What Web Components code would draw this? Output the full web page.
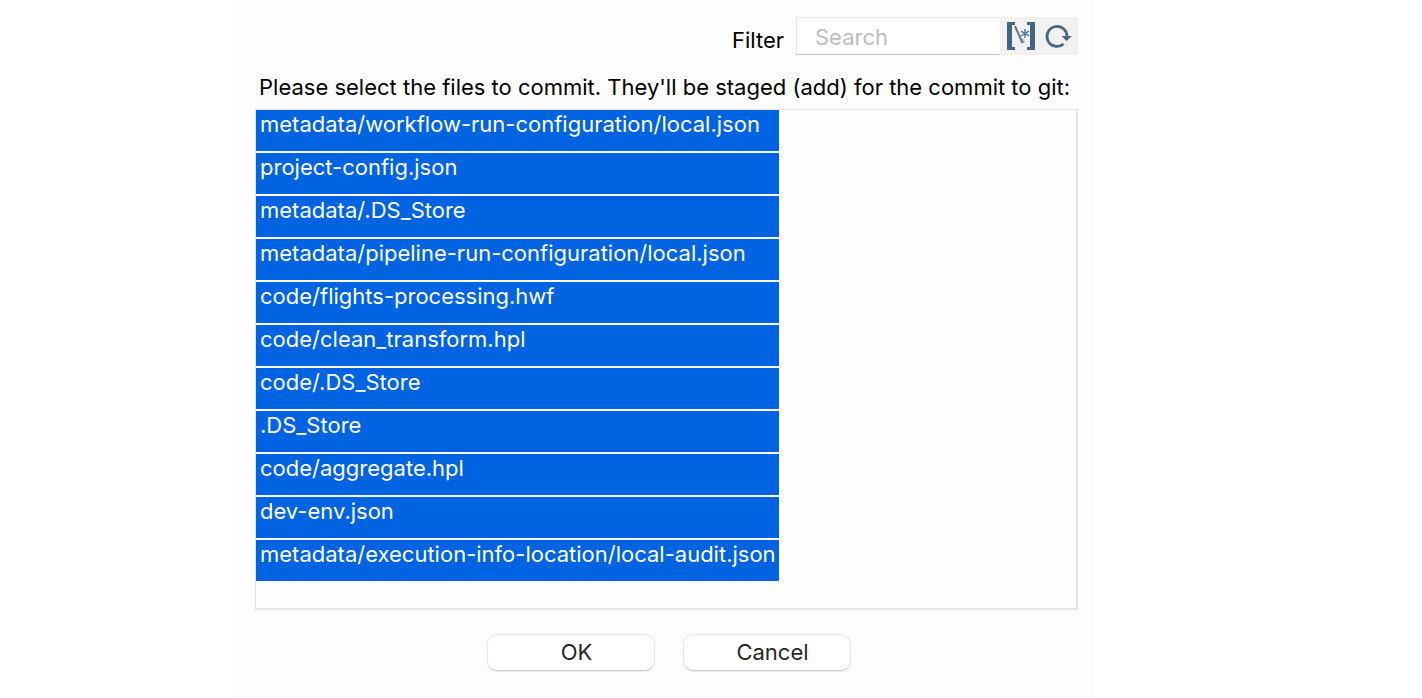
<!DOCTYPE html>
<html lang="en">
<head>
<meta charset="utf-8">
<meta name="viewport" content="width=device-width, initial-scale=1">
<title>Commit files</title>
<style>
    body {
        margin: 0;
        min-height: 100vh;
        display: grid;
        grid-template-columns: 232fr 863fr 327fr;
        background-color: #fff;
        color: #000;
        font-family: Inter, "Liberation Sans", sans-serif;
        font-size: 22px;
        line-height: 28px;
    }
    commit-dialog {
        grid-column: 2;
    }
</style>
</head>
<body>
<commit-dialog>
    <search-filter slot="filter" label="Filter" placeholder="Search"></search-filter>
    <span slot="message">Please select the files to commit. They'll be staged (add) for the commit to git:</span>
    <file-list></file-list>
    <dialog-button slot="actions">OK</dialog-button>
    <dialog-button slot="actions">Cancel</dialog-button>
</commit-dialog>

<script>
class CommitDialog extends HTMLElement {
    constructor() {
        super();
        this.attachShadow({ mode: 'open' });
        this.shadowRoot.innerHTML = `
            <style>
                :host {
                    display: block;
                    box-sizing: border-box;
                    padding: 17px 17px 24px 23px;
                    background-color: #fdfdfd;
                }
                .filter {
                    display: flex;
                    justify-content: flex-end;
                }
                .message {
                    padding: 18px 4px 8px;
                }
                .actions {
                    display: flex;
                    justify-content: center;
                    gap: 28px;
                    padding: 24px 0 0 4px;
                }
            </style>
            <div class="filter"><slot name="filter"></slot></div>
            <div class="message"><slot name="message"></slot></div>
            <slot></slot>
            <div class="actions"><slot name="actions"></slot></div>
        `;
    }
}

class SearchFilter extends HTMLElement {
    constructor() {
        super();
        this.attachShadow({ mode: 'open' });
    }

    connectedCallback() {
        const label = this.getAttribute('label') || 'Filter';
        const placeholder = this.getAttribute('placeholder') || '';

        this.shadowRoot.innerHTML = `
            <style>
                :host {
                    display: flex;
                    align-items: center;
                    gap: 12px;
                }
                label {
                    padding-top: 8px;
                }
                .bar {
                    display: flex;
                    align-items: center;
                    box-sizing: border-box;
                    height: 38px;
                    padding-right: 2px;
                    background-color: #f1f1f1;
                }
                input {
                    box-sizing: border-box;
                    width: 204px;
                    height: 38px;
                    margin-right: 2px;
                    padding: 2px 18px 0;
                    border: 1px solid #e6e6e6;
                    border-right: 0;
                    border-bottom-color: #c4c4c4;
                    background-color: #fff;
                    color: inherit;
                    font: inherit;
                    outline: none;
                }
                input::placeholder {
                    color: #bdbdbd;
                }
                button {
                    display: flex;
                    align-items: center;
                    justify-content: center;
                    width: 37px;
                    height: 38px;
                    padding: 0;
                    border: 0;
                    background: none;
                    color: #446583;
                    cursor: pointer;
                }
            </style>
            <label for="search">${label}</label>
            <div class="bar">
                <input id="search" type="text" placeholder="${placeholder}">
                <button type="button" aria-label="Use regular expression">
                    <svg width="28" height="28" viewBox="0 0 28 28" fill="currentColor" stroke="currentColor">
                        <path d="M0 0H8V3H5V25H8V28H0ZM28 0H20V3H23V25H20V28H28Z" stroke="none"/>
                        <path d="M8 4L15.5 21" fill="none" stroke-width="2" opacity=".85"/>
                        <path d="M16.5 17V21" fill="none" stroke-width="2" opacity=".4"/>
                        <path d="M18 7V16M14 9.2L22 13.8M22 9.2L14 13.8" fill="none" stroke-width="1.5" opacity=".85"/>
                    </svg>
                </button>
                <button type="button" aria-label="Refresh">
                    <svg width="28" height="28" viewBox="0 0 28 28" fill="none" stroke="currentColor">
                        <path d="M19.5 22A10 10 0 1 1 23 14" stroke-width="2.8"/>
                        <path d="M17.5 14H28L22.5 19Z" fill="currentColor" stroke="none"/>
                    </svg>
                </button>
            </div>
        `;
    }
}

class FileList extends HTMLElement {
    constructor() {
        super();
        this.attachShadow({ mode: 'open' });
        this.files = [
            'metadata/workflow-run-configuration/local.json',
            'project-config.json',
            'metadata/.DS_Store',
            'metadata/pipeline-run-configuration/local.json',
            'code/flights-processing.hwf',
            'code/clean_transform.hpl',
            'code/.DS_Store',
            '.DS_Store',
            'code/aggregate.hpl',
            'dev-env.json',
            'metadata/execution-info-location/local-audit.json'
        ];
    }

    connectedCallback() {
        this.shadowRoot.innerHTML = `
            <style>
                :host {
                    display: block;
                    padding-bottom: 25px;
                    border: 2px solid #e5e5e5;
                    border-width: 1px 2px 2px 1px;
                }
                table {
                    border-collapse: collapse;
                }
                td {
                    height: 41px;
                    padding: 0 3px 0 4px;
                    border-bottom: 2px solid #fdfdfd;
                    vertical-align: top;
                    white-space: nowrap;
                }
                tr.selected td {
                    background-color: #0063e1;
                    background-clip: padding-box;
                    color: #fff;
                }
            </style>
            <table aria-label="Files to commit">
                <tbody></tbody>
            </table>
        `;

        const body = this.shadowRoot.querySelector('tbody');
        this.files.forEach((file) => {
            const row = body.insertRow();
            row.className = 'selected';
            row.insertCell().textContent = file;
            // Clicking a row takes it in or out of the commit
            row.addEventListener('click', () => row.classList.toggle('selected'));
        });
    }
}

class DialogButton extends HTMLElement {
    constructor() {
        super();
        this.attachShadow({ mode: 'open' });
        this.shadowRoot.innerHTML = `
            <style>
                :host {
                    display: block;
                }
                button {
                    box-sizing: border-box;
                    width: 168px;
                    height: 37px;
                    padding: 0 0 2px 12px;
                    border: 1px solid #e8e8e8;
                    border-bottom-color: #cfcfcf;
                    border-radius: 10px;
                    background-color: #fff;
                    box-shadow: 0 1px 1px rgba(0, 0, 0, 0.08);
                    color: #262626;
                    font: inherit;
                    cursor: pointer;
                }
            </style>
            <button type="button"><slot></slot></button>
        `;
    }
}

customElements.define('commit-dialog', CommitDialog);
customElements.define('search-filter', SearchFilter);
customElements.define('file-list', FileList);
customElements.define('dialog-button', DialogButton);
</script>
</body>
</html>
